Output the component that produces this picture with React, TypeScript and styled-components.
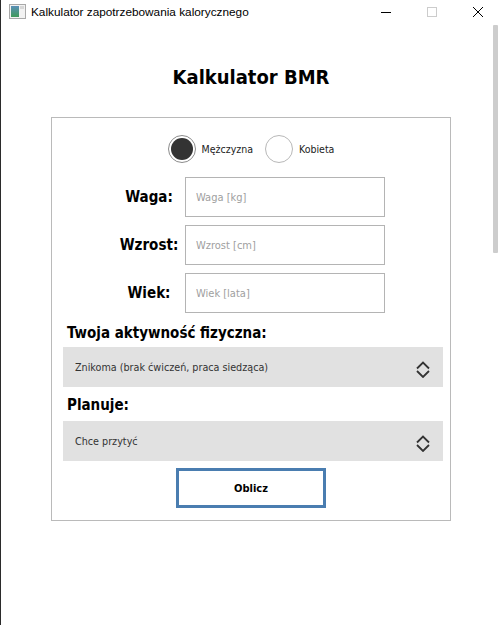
import React, { useState } from "react";
import styled, { createGlobalStyle } from "styled-components";

const UI_FONT = `"DejaVu Sans", "Liberation Sans", sans-serif`;

const GlobalStyle = createGlobalStyle`
  html, body {
    margin: 0;
    padding: 0;
    background: #ffffff;
    overflow: hidden;
  }
  * { box-sizing: border-box; }
`;

const Window = styled.div`
  position: relative;
  width: 498px;
  height: 625px;
  background: #ffffff;
  border-left: 1px solid #2b2b2b;
  overflow: hidden;
  display: flex;
  flex-direction: column;
`;

const TitleBar = styled.div`
  height: 23px;
  display: flex;
  align-items: center;
  padding-left: 8px;
  flex-shrink: 0;
`;

const TitleText = styled.span`
  margin-left: 5px;
  font-family: "Liberation Sans", sans-serif;
  font-size: 11.8px;
  color: #000;
  white-space: nowrap;
`;

const Controls = styled.div`
  margin-left: auto;
  margin-right: -3px;
  display: flex;
  height: 100%;
`;

const ControlButton = styled.div`
  width: 46px;
  height: 100%;
  display: flex;
  align-items: center;
  justify-content: center;
`;

const ScrollThumb = styled.div`
  position: absolute;
  right: 0px;
  top: 25px;
  width: 5px;
  height: 228px;
  background: #cdcdcd;
  border-radius: 1px;
`;

const Content = styled.main`
  width: 400px;
  margin-left: 50px;
  display: flex;
  flex-direction: column;
  align-items: stretch;
`;

const Heading = styled.h1`
  margin: 42px 0 0 0;
  height: 52px;
  font-family: ${UI_FONT};
  font-stretch: condensed;
  font-weight: bold;
  font-size: 20px;
  line-height: 24px;
  text-align: center;
  color: #000;
`;

const Panel = styled.section`
  width: 400px;
  height: 404px;
  border: 1px solid #bababa;
  padding: 17px 6px 0 11px;
  display: flex;
  flex-direction: column;
  font-family: ${UI_FONT};
  font-stretch: condensed;
`;

const RadioRow = styled.div`
  display: flex;
  justify-content: center;
  align-items: center;
  height: 28px;
  padding-right: 5px;
`;

const RadioOption = styled.label`
  display: flex;
  align-items: center;
  gap: 6px;
  font-size: 10.5px;
  color: #222;
  cursor: pointer;
  & + & {
    margin-left: 12px;
  }
`;

const RadioCircle = styled.span<{ $checked: boolean }>`
  width: 28px;
  height: 28px;
  border-radius: 50%;
  border: 1px solid ${(p) => (p.$checked ? "#8c8c8c" : "#b8b8b8")};
  background: #fff;
  display: flex;
  align-items: center;
  justify-content: center;
  &::after {
    content: "";
    width: 22px;
    height: 22px;
    border-radius: 50%;
    background: ${(p) => (p.$checked ? "#333333" : "transparent")};
  }
`;

const FormGrid = styled.div`
  margin-top: 14px;
  display: grid;
  grid-template-columns: 68px 200px;
  row-gap: 8px;
  justify-content: center;
  padding-right: 5px;
`;

const FieldLabel = styled.label`
  display: flex;
  align-items: center;
  justify-content: center;
  font-size: 15px;
  font-weight: bold;
  color: #000;
  padding-right: 4px;
`;

const TextInput = styled.input`
  width: 200px;
  height: 40px;
  border: 1px solid #b4b4b4;
  padding: 0 10px;
  font-family: ${UI_FONT};
  font-stretch: condensed;
  font-size: 11px;
  color: #222;
  outline: none;
  &::placeholder {
    color: #a0a0a0;
  }
`;

const SectionLabel = styled.div<{ $top: number }>`
  margin-top: ${(p) => p.$top}px;
  padding-left: 4px;
  height: 20px;
  line-height: 20px;
  font-size: 15px;
  font-weight: bold;
  color: #000;
`;

const SelectWrap = styled.div<{ $top: number }>`
  position: relative;
  width: 380px;
  height: 40px;
  margin-top: ${(p) => p.$top}px;
`;

const SelectBox = styled.select`
  appearance: none;
  width: 100%;
  height: 100%;
  border: none;
  background: #e1e1e1;
  padding: 0 12px;
  font-family: ${UI_FONT};
  font-stretch: condensed;
  font-size: 10.7px;
  color: #333;
  outline: none;
`;

const Chevrons = styled.svg`
  position: absolute;
  right: 13px;
  top: 14px;
  pointer-events: none;
`;

const SubmitButton = styled.button`
  align-self: center;
  margin-top: 7px;
  margin-right: 5px;
  width: 150px;
  height: 40px;
  background: #fff;
  border: 3px solid #4a7db0;
  font-family: ${UI_FONT};
  font-stretch: condensed;
  font-weight: bold;
  font-size: 11px;
  color: #000;
`;

const AppIcon = () => (
  <svg width="17" height="15" viewBox="0 0 17 15">
    <defs>
      <linearGradient id="ig" x1="0" y1="0" x2="0" y2="1">
        <stop offset="0" stopColor="#5a8fb8" />
        <stop offset="1" stopColor="#3f9a5a" />
      </linearGradient>
    </defs>
    <rect x="0.5" y="0.5" width="16" height="14" fill="#f2f2f2" stroke="#a9a9a9" />
    <rect x="2" y="2" width="8" height="11" fill="url(#ig)" />
    <rect x="11" y="2" width="4" height="3" fill="#d7d7d7" />
  </svg>
);

const ChevronIcon = () => (
  <Chevrons width="14" height="17" viewBox="0 0 14 17">
    <polyline points="1,7.5 7,1.5 13,7.5" fill="none" stroke="#333" strokeWidth="1.8" />
    <polyline points="1,10 7,16 13,10" fill="none" stroke="#333" strokeWidth="1.8" />
  </Chevrons>
);

export default function App() {
  const [gender, setGender] = useState<"m" | "k">("m");
  return (
    <>
      <GlobalStyle />
      <Window>
        <TitleBar>
          <AppIcon />
          <TitleText>Kalkulator zapotrzebowania kalorycznego</TitleText>
          <Controls>
            <ControlButton>
              <svg width="10" height="10" viewBox="0 0 10 10">
                <line x1="0" y1="5.5" x2="10" y2="5.5" stroke="#000" strokeWidth="1" />
              </svg>
            </ControlButton>
            <ControlButton>
              <svg width="10" height="10" viewBox="0 0 10 10">
                <rect x="0.5" y="0.5" width="9" height="9" fill="none" stroke="#cccccc" strokeWidth="1" />
              </svg>
            </ControlButton>
            <ControlButton>
              <svg width="10" height="10" viewBox="0 0 10 10">
                <line x1="0" y1="0" x2="10" y2="10" stroke="#000" strokeWidth="1" />
                <line x1="10" y1="0" x2="0" y2="10" stroke="#000" strokeWidth="1" />
              </svg>
            </ControlButton>
          </Controls>
        </TitleBar>
        <ScrollThumb />
        <Content>
          <Heading>Kalkulator BMR</Heading>
          <Panel>
            <RadioRow>
              <RadioOption onClick={() => setGender("m")}>
                <RadioCircle $checked={gender === "m"} />
                Mężczyzna
              </RadioOption>
              <RadioOption onClick={() => setGender("k")}>
                <RadioCircle $checked={gender === "k"} />
                Kobieta
              </RadioOption>
            </RadioRow>
            <FormGrid>
              <FieldLabel>Waga:</FieldLabel>
              <TextInput placeholder="Waga [kg]" />
              <FieldLabel>Wzrost:</FieldLabel>
              <TextInput placeholder="Wzrost [cm]" />
              <FieldLabel>Wiek:</FieldLabel>
              <TextInput placeholder="Wiek [lata]" />
            </FormGrid>
            <SectionLabel $top={10}>Twoja aktywność fizyczna:</SectionLabel>
            <SelectWrap $top={4}>
              <SelectBox defaultValue="a">
                <option value="a">Znikoma (brak ćwiczeń, praca siedząca)</option>
              </SelectBox>
              <ChevronIcon />
            </SelectWrap>
            <SectionLabel $top={8}>Planuje:</SectionLabel>
            <SelectWrap $top={6}>
              <SelectBox defaultValue="a">
                <option value="a">Chce przytyć</option>
              </SelectBox>
              <ChevronIcon />
            </SelectWrap>
            <SubmitButton>Oblicz</SubmitButton>
          </Panel>
        </Content>
      </Window>
    </>
  );
}
